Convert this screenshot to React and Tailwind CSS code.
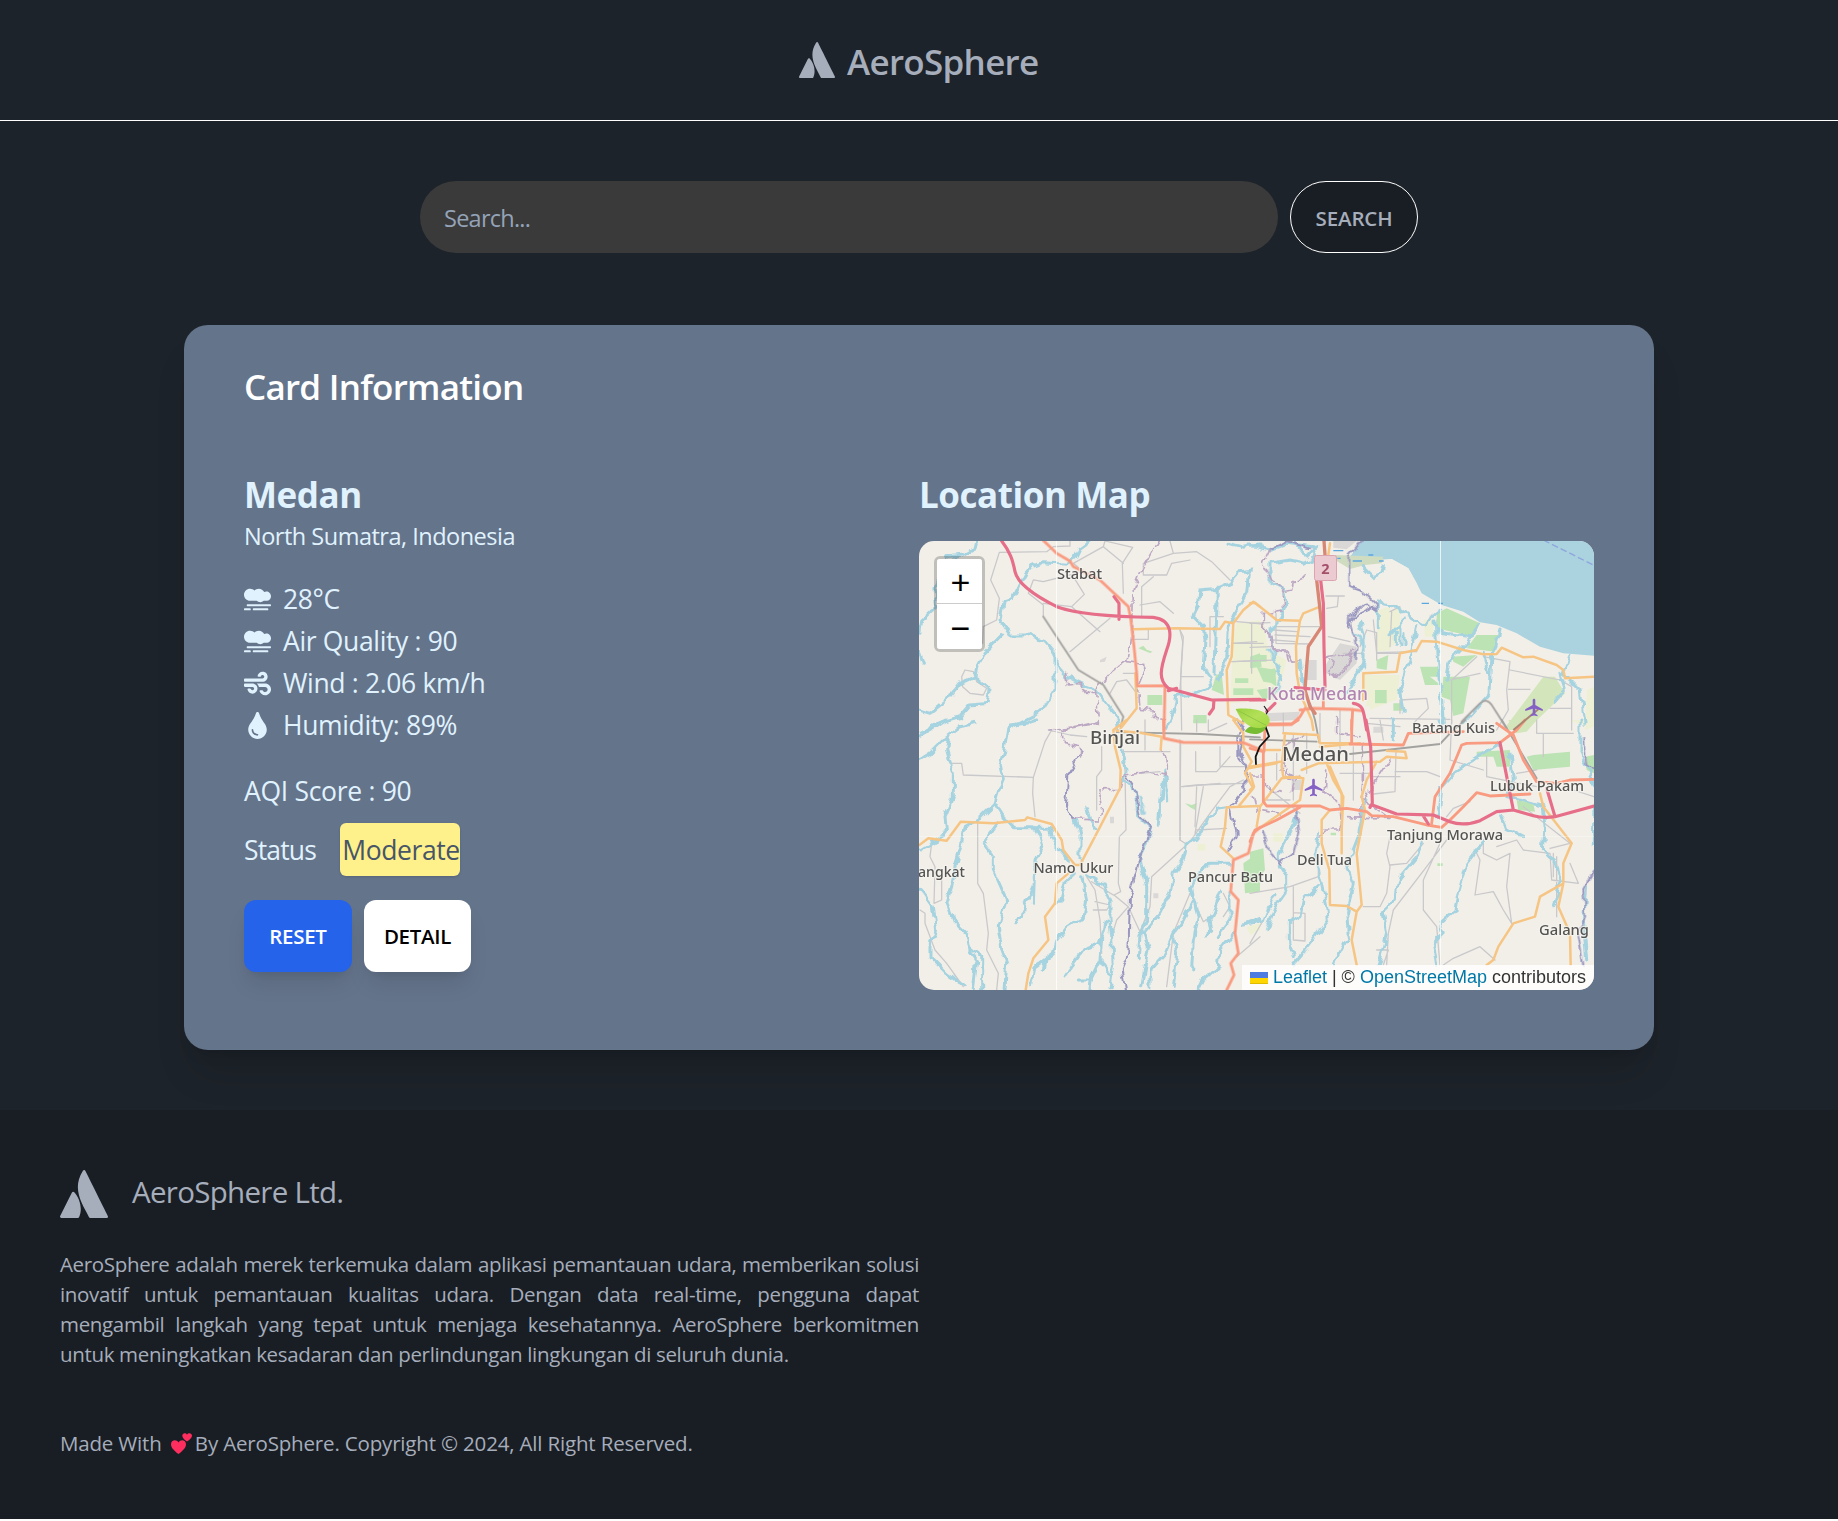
import React from "react";
import { FaAtlassian, FaSmog, FaWind, FaTint } from "react-icons/fa";
import { MdLocalAirport } from "react-icons/md";

/* Map geometry. Every sheet is drawn in its own units (3 per pixel). */
const SHEETS = {
  nw: "translate(-9 -81) scale(0.33333)",
  ne: "translate(331 -81) scale(0.33333)",
  sw: "translate(-9 179) scale(0.33333)",
  se: "translate(331 179) scale(0.33333)",
  mid: "translate(221 59) scale(0.33333)",
};

const FARM = {
  nw: "M980 490L1050 480V650L975 650L965 550Z",
  ne: "M340 645L450 645L440 720L350 740ZM385 450L420 440V570L380 575ZM0 580L60 600L70 650L0 680ZM520 480L550 475L550 530L525 530ZM1010 690L1032 680V800L1005 810Z",
  sw: "M862 372h25v20h-25zM1010 620l40 -10v20l-30 15z",
  se: "M960 0L1032 0V20L980 10Z M70 340l30 0v25h-30z",
  mid: "M290 70L370 65L385 150L440 180L420 260L400 300L270 310L275 200ZM720 50L780 20V120L740 150ZM675 225L770 225L765 300L690 330Z",
};
const WOOD = {
  nw: "M905 690L918 645L935 640L942 705ZM712 705h45v30h-45zM850 765h40v25h-40zM685 565l15 -8l10 12l18 6l-8 4z",
  ne: "M590 445L690 490L670 530L560 505V460ZM680 525L745 525L735 575L650 565ZM605 590L680 585L640 620L610 605ZM580 650L660 650L640 760L610 768L600 720L575 710ZM380 600L415 585L410 630L380 625ZM510 620h55v30h-25l25 20v5h-40zM0 590L30 580L35 620L0 625ZM30 635L75 625L80 680L50 660ZM375 690h35v40h-35zM430 730h28v22h-28z",
  sw: "M1000 430L1050 395V515L1005 520ZM850 0h35v8h-35zM825 250l20 5l15 -5l-5 20l-15 -8z",
  se: "M680 95L780 90V140L740 140L730 110L680 110ZM830 110L850 105L960 95V140L850 150ZM800 240L850 250L855 275L805 270ZM0 395L40 385L45 450L0 515ZM1005 110L1032 105V160L1010 150ZM562 430h16v8h-16zM242 338h16v8h-16z",
  mid: "M350 200L410 210L400 250L370 245ZM345 165h35v20h-35zM285 235h40v14h-40zM280 265h60v20h-60zM350 270L405 262L400 290L370 300Z",
};
const AIRFIELD = {
  ne: "M760 810L880 650L915 650L945 700L830 810Z",
  se: "M775 0L860 0L830 35L800 40Z",
};
const URBAN = {
  mid: "M560 190L600 130L650 140V190L600 240L550 215ZM375 340L480 335L470 360L390 364ZM500 180l30 0l0 60l-30 0zM455 540h30v30h-30zM700 380h30v18h-30z",
  ne: "M250 243h70l-30 25l-40 -5z",
  nw: "M570 600l20 -10l-5 15l-15 2z",
  sw: "M600 290h12v20h-12zM730 520h15v15h-15z",
};
const SEA =
  "M335 243L300 290L380 300L425 297L475 325L500 370L515 400L575 435L640 455L690 487L740 495L800 520L870 560L940 580L1032 587V243Z";
const MARSH = "M255 285L400 290L395 310L345 315L300 327L255 300Z";
const SHORE = "M330 305L380 302L425 297L475 325L500 370L512 405L440 420L400 380L340 340Z";
const RIVER = {
  nw: "M200 243L195 265L160 285L110 290M115 300L75 390L80 440L35 480L30 520M540 243L510 265L495 295L470 310L400 305L365 320L345 345L325 385L310 415L280 425L270 480L300 525L350 525L405 545L435 580V690L400 745L370 770L300 805M275 525L260 540L225 575L200 620L195 650L240 690L235 730L180 735L150 770L80 790L30 820M195 650L150 670L110 720L60 760L28 750M435 610L470 650L510 670L560 690L590 730L620 770L625 810M1030 330L990 335L960 370L925 385L870 390L865 440L850 470L880 500L885 540L880 620L900 650L905 680L850 700L800 710L790 760L770 800M922 390L915 640M1015 340L1010 400L985 440L955 500L950 600L935 630L925 660M1050 255L1000 262L960 250M28 575L40 610",
  ne: "M0 255L60 270L110 250L190 260L200 290L165 310L120 300L60 310V370L100 390L110 430L90 480L60 510L75 600L95 660M140 250L170 290L200 260M330 490L345 540V600L310 660L290 700M385 425L430 435L480 470L525 495L545 470L575 450M385 430V500M460 480L420 525M436 520v30M450 500v50M462 520v30M500 500L480 600L450 700L460 760M555 480L565 640L575 720L580 790M560 515L660 530M690 490L650 550L600 600L590 660M750 510L725 600L720 700L640 790M700 580L715 635M960 585L940 640L990 690L1005 790M930 640L945 690L910 730M150 600L160 680M340 320L370 350L395 340L400 315",
  sw: "M28 50L80 20L110 0M28 120L60 100L110 50L150 20L195 10M115 50L110 90L130 160V230L105 290L110 330L90 355L30 390M380 0L350 10L300 15L290 40L280 100L270 130L280 180L265 215L255 250L210 295L165 320L150 390L135 440L125 500L110 550L130 600L170 640L180 690L200 720L190 810M255 250L280 290L310 320L370 320L385 345L395 380L375 420L370 550M380 325L420 325L440 380L475 420M265 310L220 370L250 410V450L290 540L265 620L275 690L290 730L285 810M370 500L345 550L340 590L315 605M28 505L70 560L80 630L60 670V710L110 760L165 800M180 680L215 710V810M490 460L465 485L450 550L440 550M515 470L530 540L520 590L470 620L440 660L430 700L375 740L365 790M435 700L405 725L400 745M530 465L580 495L600 540V600L605 650L610 740L600 800M590 600L570 670L520 690L465 765M575 660L570 720L545 770L540 810M505 780L545 780M570 720L600 770M495 300L510 340V420M530 260L540 300L555 325M635 80L645 150L640 180L675 210L685 290L725 325L710 370L690 410L695 440L710 500V590L690 650L685 710M765 150L755 220L745 310M765 160L770 240M700 640L715 680L695 800M950 260L920 265L890 310L860 355L830 370L820 420L790 460L780 520L750 580L700 640M955 430L900 430L870 450L845 500L850 540L820 600L790 640L765 700L720 750V800M845 520L865 590L850 660L845 750M790 650L800 700L790 800M935 510L900 600L905 630L885 645M960 520V600L925 650M970 640L930 690L925 740L880 780L865 810M1000 615L1050 595",
  se: "M140 280L130 320L85 400V430L110 470V510L75 560L50 630M0 610L40 600L75 520M205 340L195 400L215 480L230 560L235 600L205 640L160 700L130 735M205 500L160 540L150 590L115 610V660L130 710M345 240L325 350L290 440L310 490L290 580L295 650L250 735M520 365L500 410L450 470L435 540L400 575L410 640L385 735M700 365L650 430L625 520L615 570L570 610L580 640L550 670L560 735M750 70L620 150L575 200L570 260L560 290M570 0L578 30M755 290L770 325L820 350M780 100L790 180L770 230L880 260L885 320L880 390L920 430L930 480L912 560M990 0V100L1032 190M430 0V60M1010 500L1000 600L1010 720M1032 270L1030 370",
  mid: "M385 150L410 190L420 240L400 290M0 595L10 640M640 100L675 130L670 200",
};
const LANE = {
  nw: "M480 243V258L430 260L410 275L268 277L242 360L268 415L260 480L220 500L218 550M640 400L637 310L668 262L585 243L580 260L490 310L520 335L400 365L370 360L355 400L400 435V470M580 260L640 310M490 350L523 403L485 440L400 430M485 440L570 515M600 475L480 575M700 345V310L790 280L860 275L905 305L960 360M790 280L780 243M700 345L770 345L785 310L840 300M695 380L730 350M695 380V470M810 510L818 545L812 650L880 650M812 650L815 810M900 470V560M900 470H940M640 640L675 640M965 550L1040 545M965 605L1040 602M1025 490V640M680 700L650 660L620 665L600 700M670 538H715V508M155 650l10 -20l25 5l10 30l30 20l-10 20l-40 -5l-22 -20z",
  ne: "M228 408L283 408M75 500L210 500M75 525L180 530M78 460V550L180 552M0 490L60 488M380 578L500 575M350 510L330 560M350 510L380 518V600M425 455L420 560M420 455L450 440M525 495L545 465M680 590L605 660V790M700 590L780 605L770 690L775 750L740 810M780 630L930 660L965 680V810M775 688L840 688M360 775L600 778M450 760V720L530 715L535 745L490 790M600 660L690 640M900 745L965 745M265 410L262 440L230 445M235 530L300 545M0 562L70 560",
  sw: "M120 130L155 130L160 165L370 172L405 65L425 30M370 172L368 220L375 290M203 310V490L220 520L235 640L230 690L265 760L260 810M415 30L480 45L530 50M640 90L645 150L648 330L628 350L625 490L632 515L612 525L655 560L690 635L720 560L725 470L840 365L900 280L960 200L1000 180M812 70L810 360L825 370M815 200L860 195L1000 190M857 95V155L920 155L960 110M860 330L950 325M530 470L555 510L570 600L575 700M545 485L610 525M555 545L600 555L590 570L550 570M655 560L620 600L605 650M575 80V150L560 170V270M65 370L60 410L75 440L72 550L95 540V480M30 570L45 580V610L75 690L110 730L160 800M840 520L790 640L770 800M880 200L855 340M1050 650L980 710M640 95L780 95M705 0V90M860 0V35M895 0V35L950 10M850 540L880 605L920 580M940 520L960 560L940 590",
  se: "M438 92L435 215L370 222M435 155L530 155L570 170M390 0L400 60M420 350L410 400L420 440L410 520L390 560L340 560M420 435L470 430L520 370M590 360L530 440L430 570L415 640L410 735M570 370L520 480V570L560 620L570 735M680 400L690 420L675 525L730 515L760 570L785 610M700 360V400L740 420L780 400L770 500L785 610M740 380L800 360L820 390L900 400L905 480L985 490L960 430M580 735L610 715L690 680L735 720M605 0L600 120L700 150M710 110V170L860 200M860 0V40H970M880 40V110M900 385L960 370L820 260M660 245L610 265L590 290M205 440V470L120 500L0 520M130 500V660L165 663V580L130 578M0 670L40 600M920 410V590M910 400V470M970 210L1032 230M380 690H415L400 735M800 160L860 150",
  mid: "M120 90L130 110L120 270M0 15L60 5L100 40M290 65L370 72M280 130H370M280 185L400 180M400 90L470 95M400 120L465 125M120 420V720M130 560L240 550M170 560L165 680M0 520L60 515M430 340V400M460 400V600M500 400V520M540 340V420M600 330V460M640 440V600M600 520H690M380 600H450M380 560L480 640M680 370L780 380M700 530H780M410 460V540M240 440V500H320M610 160h60v40M700 60l10 100h70",
};
const BORDER = {
  nw: "M745 243L690 340L670 390L668 500L655 600L610 630L560 690L565 790L420 810M655 605L700 610L705 630L685 680L690 745L730 750V775L760 778M470 640L475 675L510 670L530 700L560 700",
  ne: "M62 265L40 310L65 360L100 395V450L40 460L38 515L65 520L70 570L110 575L115 600L150 600M165 350L130 365L125 390L100 395M220 590L250 600L240 650L290 630L310 560",
  sw: "M565 5L455 30L460 70L510 80L515 110M495 297L570 300L575 270L565 210L630 208L640 165L690 160L710 155L765 165L775 150L755 85",
  se: "M130 60V100L90 150L140 170L130 210M340 70V200L330 290M230 150L225 220L270 250L275 330L225 330L210 345M420 120L380 180L340 240L420 295L290 290M0 165H40V200L90 220",
  mid: "M370 50V100L390 100L395 150L440 150L455 180L470 180M500 400L430 440L440 540L480 530M560 170L640 160L620 200L580 230M590 350V400L660 410M340 590L350 630L420 640",
};
const DISTRICT = {
  ne: "M335 243L295 290V380L340 395L380 435L385 450L345 430L300 470V490L320 560L315 600M62 265L110 243L180 265",
  sw: "M515 90L500 120L475 160L468 260L495 297M650 170L675 210L690 290L725 325L690 410L660 530L655 700L635 750L645 810M1000 0L985 50V110L1010 140L1005 210L960 260L980 340L950 400",
  se: "M1032 455L1000 510L1005 590L985 640L1000 735M40 330L60 400L85 430L130 400L145 340L135 270M1000 60L1010 140L1032 150",
  mid: "M285 360L310 400L300 460L325 500L310 560M625 80L640 50L700 20",
};
const RAIL = {
  nw: "M400 470L505 630L580 675L640 770L632 800",
  ne: "M635 785L690 730Q710 712 725 735L770 805",
  sw: "M620 36L690 38L870 42L1050 52",
  se: "M180 -50L195 0L208 68M300 102L570 72L600 40L645 0M755 0L860 175M0 58L200 65",
};
const YELLOW = {
  nw: "M670 508L800 505L930 507L945 485L970 490L1000 450L1030 425L1050 440M970 490L965 590L950 630L955 765L1000 790M676 640L680 745L632 805",
  ne: "M0 430L15 428L80 480L150 482L160 460L210 440M150 482L138 560L140 640L150 700L185 780L190 810M240 250L235 285M340 720V640L440 635L450 580L500 570L515 543L560 545L640 570L700 583L740 582L755 563L820 592L850 590L920 615L940 630L945 655L1032 650",
  sw: "M28 375L55 355L110 362L152 305L250 310L345 300L352 292L425 312L455 360L460 390L495 435L510 435L560 340L630 205L632 150L615 80L610 30L650 0M620 32L690 38L755 50L752 90M475 460L440 490L435 550L405 590L415 660L370 715L355 760L347 810M970 0L1000 40V80L1025 125L1005 160L1030 205L985 260M1050 258L950 262L945 320L932 380L970 415",
  se: "M100 40L205 45L210 70L300 70M100 170L95 140L105 40M100 170L160 175L150 240L20 330M155 150L205 130L390 125L410 110L470 115L465 95L410 92M230 130L250 180L280 230L275 330V400M240 270L215 300V370L238 450L240 555L290 558L320 575L305 660L320 735M380 125L350 180L335 230L345 270L320 400L335 555L320 575M870 220L880 260L965 370L940 430V490L870 530L855 590L790 610L745 680L730 720L710 735M940 490L925 560L960 640L962 735M0 160L12 200L0 210M0 140L90 125",
  mid: "M325 505L410 490M350 450H420M540 440L660 430M570 500L605 580V640M350 680L360 620L425 535L480 530",
};
const ORANGE = {
  nw: "M402 243L440 280L480 303L490 320L570 360L655 440L662 475L672 560L680 640L682 678L765 677L762 810",
  ne: "M150 750L190 745L300 748L335 752M50 795L125 793L150 770L165 745M308 748L305 810M220 690V745",
  sw: "M760 0L762 55L820 67L1000 68L1050 88M1050 322L1030 340L1015 400L970 420L962 515L985 540L975 640L985 700L962 730L972 765L950 810",
  se: "M0 85L40 95V245L50 258L210 258L240 270L290 265L350 275L365 287L430 290L530 315L575 322L600 300L640 260L680 218L720 228L840 222M545 310L555 230L600 160L635 75L650 70L750 68L800 30L825 0M740 10L790 45L820 120L860 185L920 190L960 180L1032 178M0 365L15 330L80 300L150 262M300 72L460 75L475 40L640 35M50 12L125 12L145 0M42 95L45 20M305 70V0",
};
const BROWN = { ne: "M222 243L225 285M200 360L208 430L215 500L175 560L170 620L165 690L180 740L195 760" };
const MOTORWAY = {
  nw: "M275 243C300 275 308 300 315 335C325 380 400 420 440 440C500 462 600 470 730 472C790 480 785 530 770 570C750 630 745 660 775 685L905 720L1050 718M612 410L627 430V478M775 692L800 685M912 720L910 745L898 762",
  ne: "M212 360L220 430L222 560L225 680M0 720H45M135 683L225 690M310 730C345 735 340 760 350 810M50 755L75 730",
  se: "M348 0L362 80L367 250L360 262M367 255L440 282L550 285L600 305Q640 320 690 302L740 275L790 270L850 287Q880 295 915 290L1032 258M750 68L790 270M890 205L915 290M520 288L535 312",
};

const LABELS = [
  { t: "Stabat", x: 138, y: 37.5, w: 45, s: 14 },
  { t: "Binjai", x: 171, y: 202.8, w: 50, s: 18 },
  { t: "Medan", x: 363, y: 219.8, w: 67, s: 20.5 },
  { t: "Batang Kuis", x: 493, y: 192.4, w: 83, s: 14 },
  { t: "Lubuk Pakam", x: 571, y: 250.3, w: 94, s: 14 },
  { t: "Tanjung Morawa", x: 468, y: 298.5, w: 116, s: 14 },
  { t: "Deli Tua", x: 378, y: 324, w: 55, s: 14 },
  { t: "Namo Ukur", x: 114.5, y: 332, w: 80, s: 14 },
  { t: "angkat", x: -1, y: 336, w: 47, s: 14 },
  { t: "Pancur Batu", x: 269, y: 341, w: 85, s: 14 },
  { t: "Galang", x: 620, y: 393.5, w: 50, s: 14 },
];

function Layer({ data, ...style }) {
  return (
    <g {...style}>
      {Object.entries(data).map(([sheet, d]) => (
        <path key={sheet} d={d} transform={SHEETS[sheet]} />
      ))}
    </g>
  );
}

function MapCanvas() {
  const line = { fill: "none", strokeLinejoin: "round", strokeLinecap: "round" };
  return (
    <svg viewBox="0 0 675 449" className="block h-[449px] w-[675px]">
      <defs>
        <filter id="meander" x="0" y="0" width="675" height="449" filterUnits="userSpaceOnUse" colorInterpolationFilters="sRGB">
          <feTurbulence type="fractalNoise" baseFrequency="0.12" numOctaves="1" seed="4" />
          <feDisplacementMap in="SourceGraphic" scale="9" xChannelSelector="R" yChannelSelector="G" />
        </filter>
        <linearGradient id="leaf" x1="0" y1="0" x2="1" y2="1">
          <stop offset="0" stopColor="#98d13f" />
          <stop offset="0.5" stopColor="#b3e058" />
          <stop offset="1" stopColor="#a2d83f" />
        </linearGradient>
      </defs>
      <rect width="675" height="449" fill="#f2efe9" />
      <Layer data={FARM} fill="#eef0d5" />
      <Layer data={WOOD} fill="#bce3b4" />
      <Layer data={AIRFIELD} fill="#d3e6bb" />
      <Layer data={URBAN} fill="#dad8d6" />
      <g transform={SHEETS.ne}>
        <path d={SEA} fill="#aad3df" />
        <path d={SHORE} fill="#f2efe9" />
        <path d={MARSH} fill="#d0dcc0" />
      </g>
      <Layer data={LANE} {...line} stroke="#c9c8ca" strokeWidth="3.8" />
      <g filter="url(#meander)">
        <Layer data={RIVER} {...line} stroke="#a6d3e0" strokeWidth="9" />
        <Layer data={DISTRICT} {...line} stroke="#9a98c0" strokeWidth="6" />
        <Layer data={BORDER} {...line} stroke="#bda8c4" strokeWidth="5" strokeDasharray="22 8" />
      </g>
      <path d="M250 272h30M262 295h10M308 303h28M355 285h15M387 303h14M515 430h22M565 430h14" transform={SHEETS.ne} stroke="#5ba7e0" strokeWidth="4" />
      <path d="M880 240L1032 316" transform={SHEETS.ne} stroke="#8fa5dc" strokeWidth="4" strokeDasharray="20 9" />
      <Layer data={RAIL} {...line} stroke="#a3a29f" strokeWidth="5.5" />
      <Layer data={YELLOW} {...line} stroke="#f6c583" strokeWidth="7.5" />
      <Layer data={ORANGE} {...line} stroke="#f99b80" strokeWidth="8.5" />
      <Layer data={BROWN} {...line} stroke="#d78774" strokeWidth="10" />
      <path d="M865 748L790 810" transform={SHEETS.ne} stroke="#a98573" strokeWidth="6" />
      <Layer data={MOTORWAY} {...line} stroke="#e66e89" strokeWidth="9.5" />
      <path d="M137.5 0V449M521.5 0V449" stroke="#fff" strokeOpacity="0.75" />
      <path d="M0 295.5H675" stroke="#fff" strokeOpacity="0.3" />

      <rect x="395.5" y="14.5" width="22" height="25" rx="2" fill="#eccad1" stroke="#dca3b0" />
      <text x="406.5" y="32.5" textAnchor="middle" fontFamily="Noto Sans, sans-serif" fontWeight="700" fontSize="14.5" fill="#a3506a">2</text>
      <MdLocalAirport x="384" y="236" size={21} color="#8561c5" />
      <MdLocalAirport x="604.5" y="156" size={21} color="#8561c5" />

      <g fontFamily="Noto Sans, sans-serif" paintOrder="stroke" strokeLinejoin="round" stroke="#f7f5f0" strokeOpacity="0.7" strokeWidth="2.5">
        <text x="348" y="159" textLength="101" lengthAdjust="spacingAndGlyphs" fontSize="17.5" fontWeight="500" fill="#b184b1">Kota Medan</text>
        {LABELS.map((l) => (
          <text key={l.t} x={l.x} y={l.y} textLength={l.w} lengthAdjust="spacingAndGlyphs" fontSize={l.s} fill="#555453" fontWeight="500">
            {l.t}
          </text>
        ))}
      </g>

      <g transform={SHEETS.mid}>
        <path d="M372 318L383 334L378 344" fill="none" stroke="#222" strokeWidth="3.5" />
        <path d="M375 376L387 409L359 440L347 470L348 494" fill="none" stroke="#151515" strokeWidth="5.5" />
        <path d="M314 394C325 378 350 370 380 374C376 402 342 410 314 394Z" fill="#78bc33" />
        <path d="M287 327C330 322 388 330 389 362C388 384 358 387 336 381C309 371 298 350 287 327Z" fill="url(#leaf)" />
        <path d="M289 329L378 376" stroke="#8cc244" strokeWidth="2.5" />
      </g>
    </svg>
  );
}

function LocationMap() {
  return (
    <div className="relative h-[449px] w-[675px] overflow-hidden rounded-[15px]">
      <MapCanvas />
      <div className="absolute left-[15px] top-[15px] flex flex-col rounded-md border-3 border-black/20 font-['Liberation_Sans',sans-serif] text-[34px] text-black">
        <button className="flex h-[45px] w-[45px] items-center justify-center rounded-t-[3px] border-b border-[#ccc] bg-white pl-0.5 pt-0.5 leading-none">+</button>
        <button className="flex h-[45px] w-[45px] items-center justify-center rounded-b-[3px] bg-white pl-0.5 pt-0.5 leading-none">−</button>
      </div>
      <div className="absolute bottom-0 right-0 flex h-[25px] items-center whitespace-pre bg-white/80 pl-2 pr-2 font-['Liberation_Sans',sans-serif] text-[18px] leading-[25px] text-[#333]">
        <svg viewBox="0 0 18 12" className="mr-[5px] h-3 w-[18px]">
          <path fill="#4C7BE1" d="M0 0h18v6H0z" />
          <path fill="#FFD500" d="M0 6h18v6H0z" />
          <path fill="#E0BC00" d="M0 11h18v1H0z" />
        </svg>
        <span className="text-[#0078A8]">Leaflet</span>
        <span> | © </span>
        <span className="text-[#0078A8]">OpenStreetMap</span>
        <span> contributors</span>
      </div>
    </div>
  );
}

function Reading({ icon: Icon, children }) {
  return (
    <div className="flex h-[42px] items-center gap-3">
      <Icon className="h-[27px] w-[27px] shrink-0" />
      <span className="text-[26.5px] leading-[42px] tracking-[-0.35px]">{children}</span>
    </div>
  );
}

function Hearts() {
  return (
    <svg viewBox="0 0 21 21" className="ml-1 mr-[3px] inline-block h-[21px] w-[21px] align-[-3px]" fill="#ff2e5f">
      <path d="M7.5 21C3.5 18 0 14.8 0 11.2C0 7 5.5 5.8 7.5 9.6C9.5 5.8 15 7 15 11.2C15 14.8 11.5 18 7.5 21Z" />
      <path d="M16 8.6C13.5 6.8 11.3 5 11.3 2.8C11.3 -0.2 14.9 -0.6 16 1.7C17.1 -0.6 21 -0.2 21 2.8C21 5 18.5 6.8 16 8.6Z" />
    </svg>
  );
}

const ABOUT = [
  "AeroSphere adalah merek terkemuka dalam aplikasi pemantauan udara, memberikan solusi",
  "inovatif untuk pemantauan kualitas udara. Dengan data real-time, pengguna dapat",
  "mengambil langkah yang tepat untuk menjaga kesehatannya. AeroSphere berkomitmen",
];

export default function App() {
  return (
    <div className="h-[1521px] overflow-hidden bg-white font-['Open_Sans','Noto_Sans',sans-serif] text-[#a6adbb]">
      <div className="h-[1519px] bg-[#1d232a]">
        <header className="flex h-[121px] items-center justify-center gap-3 border-b border-white">
          <FaAtlassian className="h-9 w-9" />
          <span className="w-48 whitespace-nowrap pt-[3px] text-[35px] font-semibold leading-[54px] tracking-[-0.7px]">AeroSphere</span>
        </header>

        <div className="flex justify-center gap-3 pt-[60px]">
          <input
            type="text"
            placeholder="Search..."
            className="h-[72px] w-[858px] rounded-[36px] bg-[#3a3a3a] px-6 pt-0.5 text-[23.5px] tracking-[-0.75px] placeholder:text-[#94a3b8]"
          />
          <button className="h-[72px] w-32 rounded-[36px] border border-white bg-[#191e24] pt-0.5 text-[20.5px] font-semibold tracking-[-0.15px]">SEARCH</button>
        </div>

        <main className="mx-auto mt-[72px] h-[725px] w-[1470px] rounded-3xl bg-[#64748b] px-[60px] pt-[35px] shadow-[0_30px_38px_-8px_rgba(0,0,0,0.12),0_12px_15px_-9px_rgba(0,0,0,0.12)]">
          <h2 className="text-[35px] font-semibold leading-[54px] tracking-[-0.75px] text-white">Card Information</h2>
          <div className="mt-[54px] grid grid-cols-2 text-[#e0f2fe]">
            <section>
              <h3 className="text-[35px] font-bold leading-[54px] tracking-[-0.45px]">Medan</h3>
              <p className="-mt-[4px] text-[23.5px] leading-9 tracking-[-0.5px]">North Sumatra, Indonesia</p>
              <div className="mt-6">
                <Reading icon={FaSmog}>28°C</Reading>
                <Reading icon={FaSmog}>Air Quality : 90</Reading>
                <Reading icon={FaWind}>Wind : 2.06 km/h</Reading>
                <Reading icon={FaTint}>Humidity: 89%</Reading>
              </div>
              <p className="mt-6 text-[26.5px] leading-[42px] tracking-[-0.3px]">AQI Score : 90</p>
              <div className="mt-[11px] flex items-center gap-6 text-[26.5px]">
                <span className="w-[72px] whitespace-nowrap pt-[3px] tracking-[-0.85px]">Status</span>
                <span className="flex h-[53px] w-[120px] items-center justify-center whitespace-nowrap rounded-md bg-[#fef08a] pl-0.5 pt-[3px] tracking-[-0.4px] text-[#475569] shadow-sm">Moderate</span>
              </div>
              <div className="mt-6 flex gap-3 text-[20.5px] font-semibold tracking-[-0.3px]">
                <button className="h-[72px] w-[108px] rounded-xl bg-[#2563eb] pt-px text-white shadow-[0_15px_22px_-4px_rgba(0,0,0,0.1),0_6px_9px_-6px_rgba(0,0,0,0.1)]">RESET</button>
                <button className="h-[72px] w-[107px] rounded-xl bg-white pt-px text-black shadow-[0_15px_22px_-4px_rgba(0,0,0,0.1),0_6px_9px_-6px_rgba(0,0,0,0.1)]">DETAIL</button>
              </div>
            </section>
            <section>
              <h3 className="mb-[19px] text-[35px] font-bold leading-[54px] tracking-[-0.45px]">Location Map</h3>
              <LocationMap />
            </section>
          </div>
        </main>

        <footer className="mt-[60px] h-[409px] bg-[#191e24] px-[60px] pt-[60px]">
          <div className="flex items-center gap-6">
            <FaAtlassian className="h-12 w-12" />
            <span className="-mt-1 text-[29.5px] leading-[44px] tracking-[-0.7px]">AeroSphere Ltd.</span>
          </div>
          <div className="mt-[31px] w-[859px] text-[20.5px] leading-[30px] tracking-[-0.34px]">
            {ABOUT.map((line) => (
              <p key={line} className="whitespace-nowrap text-justify [text-align-last:justify]">{line}</p>
            ))}
            <p className="whitespace-nowrap">untuk meningkatkan kesadaran dan perlindungan lingkungan di seluruh dunia.</p>
          </div>
          <p className="mt-[59px] whitespace-nowrap text-[20.5px] leading-[30px] tracking-[-0.17px]">
            Made With <Hearts />By AeroSphere. Copyright © 2024, All Right Reserved.
          </p>
        </footer>
      </div>
    </div>
  );
}
